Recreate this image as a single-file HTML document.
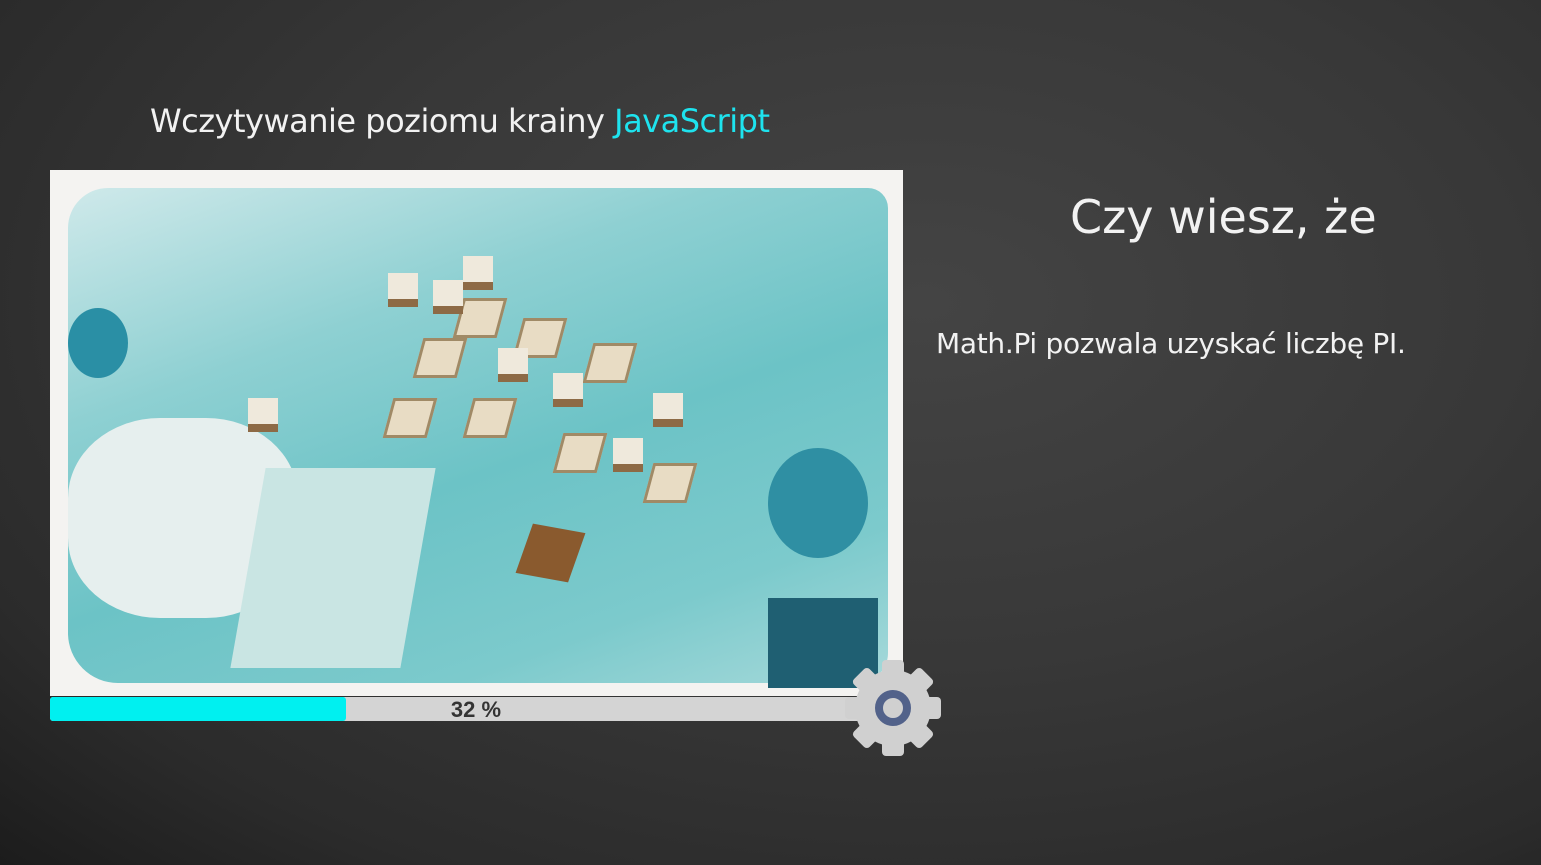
<!DOCTYPE html>
<html><head><meta charset="utf-8"><style>
html,body{margin:0;padding:0}
body{width:1541px;height:865px;overflow:hidden;position:relative;font-family:"Liberation Sans",sans-serif;
background:radial-gradient(ellipse at 60% 35%,#444 0%,#383838 45%,#2b2b2b 80%,#1c1c1c 100%);}
.t{position:absolute;color:#f2f2f2;font-family:"Comic Sans MS","DejaVu Sans",sans-serif;white-space:nowrap}
#frame{position:absolute;left:50px;top:170px;width:853px;height:526px;background:#f4f3f1;overflow:hidden}
#scene{position:absolute;left:18px;top:18px;width:820px;height:495px;border-radius:40px 20px 30px 50px;
background:linear-gradient(160deg,#cfe9ea 0%,#8ed0d2 30%,#6cc3c6 55%,#7ccacc 80%,#a6d9da 100%)}
.tile{position:absolute;width:38px;height:34px;background:#e8dcc4;border:3px solid #a08a66;transform:skew(-15deg)}
.box{position:absolute;width:30px;height:26px;background:#efe9dc;border-bottom:8px solid #8d6a45}
#bar{position:absolute;left:50px;top:697px;width:810px;height:24px;background:#d4d4d4;border-radius:3px}
#fill{position:absolute;left:50px;top:697px;width:296px;height:24px;background:#00f0f0;border-radius:3px}
</style></head><body>
<div class="t" style="left:150px;top:102px;font-size:32px;letter-spacing:-0.5px">Wczytywanie poziomu krainy <span style="color:#1ee3ee">JavaScript</span></div>
<div class="t" style="left:1070px;top:190px;font-size:46px">Czy wiesz, że</div>
<div class="t" style="left:936px;top:327px;font-size:28px;letter-spacing:-0.3px">Math.Pi pozwala uzyskać liczbę PI.</div>
<div id="frame"><div id="scene">
<div style="position:absolute;left:0;top:230px;width:230px;height:200px;background:#e6efee;border-radius:40%"></div>
<div style="position:absolute;left:180px;top:280px;width:170px;height:200px;background:#c9e5e3;transform:skew(-10deg)"></div>
<div style="position:absolute;left:700px;top:260px;width:100px;height:110px;background:#2f8fa3;border-radius:50%"></div>
<div style="position:absolute;left:700px;top:410px;width:110px;height:90px;background:#1f5f72"></div>
<div style="position:absolute;left:0;top:120px;width:60px;height:70px;background:#2a8fa5;border-radius:50%"></div>
<div class="tile" style="left:320px;top:210px"></div><div class="tile" style="left:400px;top:210px"></div>
<div class="tile" style="left:350px;top:150px"></div><div class="tile" style="left:450px;top:130px"></div>
<div class="tile" style="left:520px;top:155px"></div><div class="tile" style="left:490px;top:245px"></div>
<div class="tile" style="left:580px;top:275px"></div><div class="tile" style="left:390px;top:110px"></div>
<div class="box" style="left:320px;top:85px"></div><div class="box" style="left:365px;top:92px"></div>
<div class="box" style="left:395px;top:68px"></div><div class="box" style="left:430px;top:160px"></div>
<div class="box" style="left:485px;top:185px"></div><div class="box" style="left:585px;top:205px"></div>
<div class="box" style="left:545px;top:250px"></div><div class="box" style="left:180px;top:210px"></div>
<div style="position:absolute;left:455px;top:340px;width:55px;height:50px;background:#8a5a2e;transform:skew(-10deg) rotate(10deg)"></div>
</div></div>
<div id="bar"></div><div id="fill"></div>
<div style="position:absolute;left:346px;top:697px;width:260px;height:24px;text-align:center;font:bold 22px 'Liberation Sans',sans-serif;color:#333;line-height:25px">32 %</div>
<svg style="position:absolute;left:843px;top:658px" width="100" height="100" viewBox="-50 -50 100 100">
<g fill="#d0d0d0">
<circle r="38"/>
<g id="tt"><rect x="-11" y="-48" width="22" height="18" rx="4"/></g>
<use href="#tt" transform="rotate(45)"/><use href="#tt" transform="rotate(90)"/><use href="#tt" transform="rotate(135)"/>
<use href="#tt" transform="rotate(180)"/><use href="#tt" transform="rotate(225)"/><use href="#tt" transform="rotate(270)"/><use href="#tt" transform="rotate(315)"/>
</g>
<circle r="14" fill="none" stroke="#52628a" stroke-width="8"/>
</svg>
</body></html>
